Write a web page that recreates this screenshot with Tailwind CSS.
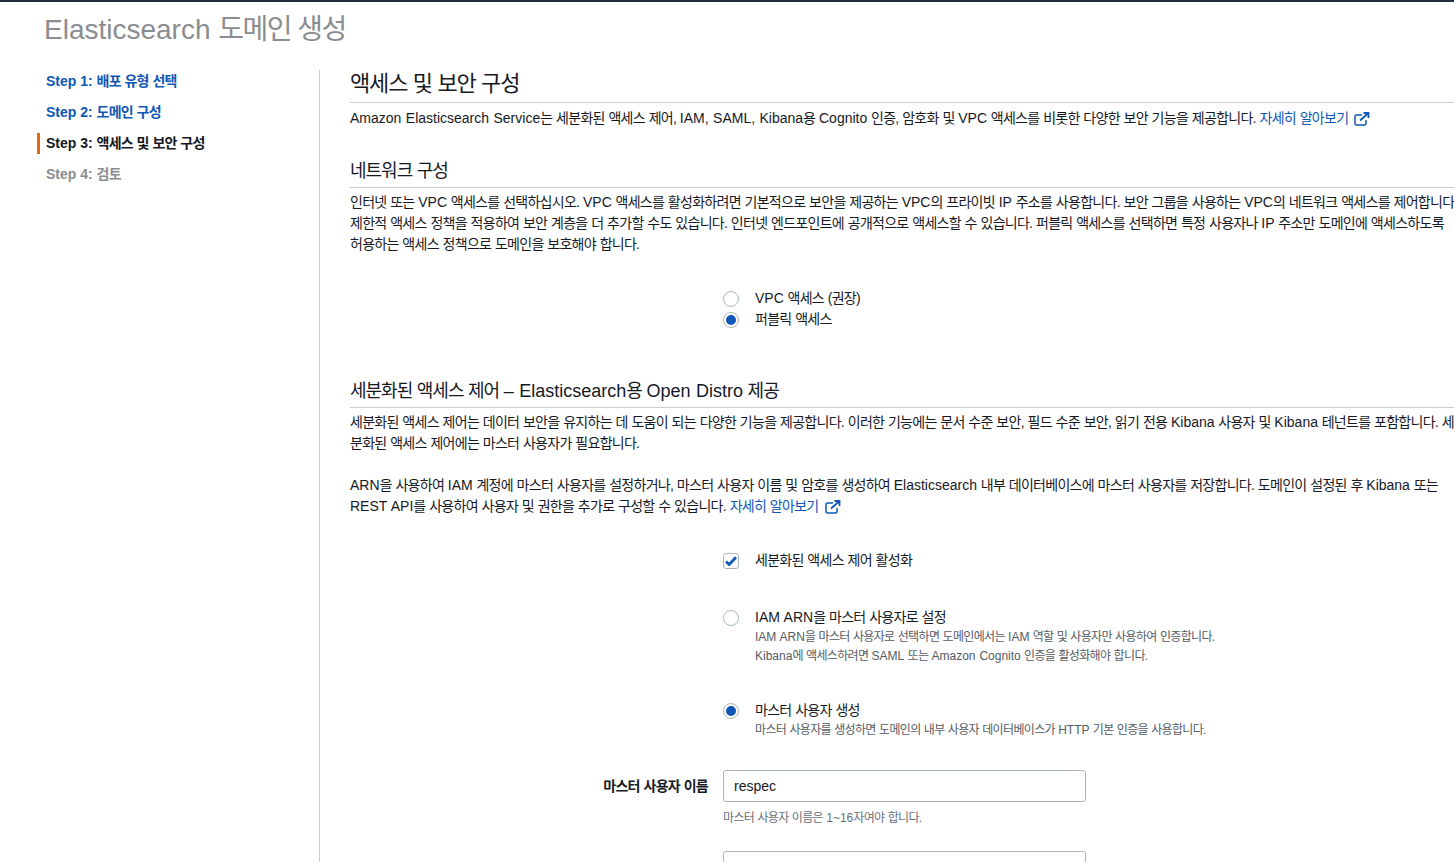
<!DOCTYPE html>
<html lang="ko">
<head>
<meta charset="utf-8">
<script src="https://cdn.jsdelivr.net/npm/@tailwindcss/browser@4"></script>
</head>
<body class="h-[862px] w-[1454px] overflow-hidden bg-white font-['Liberation_Sans','Noto_Sans_CJK_KR',sans-serif] text-[14px] leading-[21px] text-[#16191f]">
<div class="h-[2px] bg-[#232f3e]"></div>
<h1 class="h-[68px] pl-[44px] pt-[9px] text-[28px] leading-[38px] font-normal text-[#8a8d8f]">Elasticsearch <span class="tracking-[-1.5px]">도메인 생성</span></h1>
<div class="flex">
  <nav class="flex h-[800px] w-[320px] shrink-0 flex-col border-r border-[#cccccc] pt-px font-bold">
    <a class="h-[31px] pl-[46px] text-[#0f57b5]">Step 1: <span class="tracking-[-0.75px] [word-spacing:0.5px]">배포 유형 선택</span></a>
    <a class="h-[31px] pl-[46px] text-[#0f57b5]">Step 2: <span class="tracking-[-0.75px] [word-spacing:0.5px]">도메인 구성</span></a>
    <a class="mb-[10px] ml-[37px] h-[21px] border-l-[3px] border-[#dd6b10] pl-[6px] text-[#16191f]">Step 3: <span class="tracking-[-0.75px] [word-spacing:0.5px]">액세스 및 보안 구성</span></a>
    <a class="h-[21px] pl-[46px] text-[#8a8d8f]">Step 4: <span class="tracking-[-0.75px]">검토</span></a>
  </nav>
  <main class="min-w-0 flex-1 pl-[30px] tracking-[-0.72px] whitespace-nowrap [word-spacing:0.55px]">
    <h2 class="h-[33px] border-b border-[#cccccc] text-[22px] leading-[28px] font-normal tracking-[-1.15px]">액세스 및 보안 구성</h2>
    <p class="mt-[5px] flex items-center"><span><span class="tracking-normal">Amazon Elasticsearch Service</span>는 세분화된 액세스 제어, <span class="tracking-normal">IAM, SAML, Kibana</span>용 <span class="tracking-normal">Cognito</span> 인증, 암호화 및 <span class="tracking-normal">VPC</span> 액세스를 비롯한 다양한 보안 기능을 제공합니다.&nbsp;<a class="text-[#0f57b5]">자세히 알아보기</a></span>
      <svg class="ml-[6px]" width="16" height="14" viewBox="0 0 16 14" fill="none" stroke="#0f57b5" stroke-width="1.5"><path d="M8 3H2.5A1.5 1.5 0 0 0 1 4.5v7A1.5 1.5 0 0 0 2.5 13h8a1.5 1.5 0 0 0 1.5-1.5V8"/><path d="M6 8.5 14 1.5M9.5 1h5v5" stroke-width="1.8"/></svg>
    </p>
    <h3 class="mt-[28px] h-[31px] border-b border-[#cccccc] pt-[2px] text-[18px] leading-[24px] font-normal tracking-[-1px]">네트워크 구성</h3>
    <p class="mt-[4px]">인터넷 또는 <span class="tracking-normal">VPC</span> 액세스를 선택하십시오. <span class="tracking-normal">VPC</span> 액세스를 활성화하려면 기본적으로 보안을 제공하는 <span class="tracking-normal">VPC</span>의 프라이빗 <span class="tracking-normal">IP</span> 주소를 사용합니다. 보안 그룹을 사용하는 <span class="tracking-normal">VPC</span>의 네트워크 액세스를 제어합니다.<br>제한적 액세스 정책을 적용하여 보안 계층을 더 추가할 수도 있습니다. 인터넷 엔드포인트에 공개적으로 액세스할 수 있습니다. 퍼블릭 액세스를 선택하면 특정 사용자나 <span class="tracking-normal">IP</span> 주소만 도메인에 액세스하도록<br>허용하는 액세스 정책으로 도메인을 보호해야 합니다.</p>
    <div class="mt-[33px] ml-[373px] flex flex-col">
      <label class="flex h-[21px] items-center gap-[16px]"><span class="size-[16px] rounded-full border border-[#aab7b8] bg-white"></span><span><span class="tracking-normal">VPC</span> 액세스 (권장)</span></label>
      <label class="flex h-[21px] items-center gap-[16px]"><span class="flex size-[16px] items-center justify-center rounded-full border border-[#aab7b8] bg-white"><span class="size-[10px] rounded-full bg-[#0f57b5]"></span></span>퍼블릭 액세스</label>
    </div>
    <h3 class="mt-[48px] h-[30px] border-b border-[#cccccc] pt-px text-[18px] leading-[24px] font-normal tracking-[-1px]">세분화된 액세스 제어 <span class="tracking-normal">– Elasticsearch</span>용 <span class="tracking-normal">Open Distro</span> 제공</h3>
    <p class="mt-[4px]">세분화된 액세스 제어는 데이터 보안을 유지하는 데 도움이 되는 다양한 기능을 제공합니다. 이러한 기능에는 문서 수준 보안, 필드 수준 보안, 읽기 전용 <span class="tracking-normal">Kibana</span> 사용자 및 <span class="tracking-normal">Kibana</span> 테넌트를 포함합니다. 세<br>분화된 액세스 제어에는 마스터 사용자가 필요합니다.</p>
    <p class="mt-[21px] flex flex-col"><span><span class="tracking-normal">ARN</span>을 사용하여 <span class="tracking-normal">IAM</span> 계정에 마스터 사용자를 설정하거나, 마스터 사용자 이름 및 암호를 생성하여 <span class="tracking-normal">Elasticsearch</span> 내부 데이터베이스에 마스터 사용자를 저장합니다. 도메인이 설정된 후 <span class="tracking-normal">Kibana</span> 또는</span>
    <span class="flex items-center"><span><span class="tracking-normal">REST API</span>를 사용하여 사용자 및 권한을 추가로 구성할 수 있습니다.&nbsp;<a class="text-[#0f57b5]">자세히 알아보기</a></span>
      <svg class="ml-[6px]" width="16" height="14" viewBox="0 0 16 14" fill="none" stroke="#0f57b5" stroke-width="1.5"><path d="M8 3H2.5A1.5 1.5 0 0 0 1 4.5v7A1.5 1.5 0 0 0 2.5 13h8a1.5 1.5 0 0 0 1.5-1.5V8"/><path d="M6 8.5 14 1.5M9.5 1h5v5" stroke-width="1.8"/></svg></span></p>
    <div class="mt-[33px] ml-[373px]">
      <label class="flex h-[21px] items-center gap-[16px]"><span class="flex size-[16px] items-center justify-center rounded-[3px] border border-[#aab7b8] bg-white"><svg width="12" height="10" viewBox="0 0 12 10" fill="none" stroke="#0f57b5" stroke-width="2.8"><path d="M1 5.5 4.2 8.5 11 1.2"/></svg></span>세분화된 액세스 제어 활성화</label>
      <div class="mt-[36px] flex gap-[16px]"><span class="mt-[3px] size-[16px] shrink-0 rounded-full border border-[#aab7b8] bg-white"></span>
        <div><div><span class="tracking-normal">IAM ARN</span>을 마스터 사용자로 설정</div><div class="text-[12px] leading-[19px] tracking-[-0.65px] text-[#545b64]"><span class="tracking-normal">IAM ARN</span>을 마스터 사용자로 선택하면 도메인에서는 <span class="tracking-normal">IAM</span> 역할 및 사용자만 사용하여 인증합니다.<br><span class="tracking-normal">Kibana</span>에 액세스하려면 <span class="tracking-normal">SAML</span> 또는 <span class="tracking-normal">Amazon Cognito</span> 인증을 활성화해야 합니다.</div></div></div>
      <div class="mt-[34px] flex gap-[16px]"><span class="mt-[3px] flex size-[16px] shrink-0 items-center justify-center rounded-full border border-[#aab7b8] bg-white"><span class="size-[10px] rounded-full bg-[#0f57b5]"></span></span>
        <div><div>마스터 사용자 생성</div><div class="text-[12px] leading-[19px] tracking-[-0.65px] text-[#545b64]">마스터 사용자를 생성하면 도메인의 내부 사용자 데이터베이스가 <span class="tracking-normal">HTTP</span> 기본 인증을 사용합니다.</div></div></div>
    </div>
    <div class="mt-[30px] flex">
      <label class="w-[358px] pt-[6px] text-right font-bold">마스터 사용자 이름</label>
      <div class="ml-[15px] w-[363px]">
        <div class="flex h-[32px] items-center rounded-[3px] border border-[#aab7b8] bg-white px-[10px] tracking-normal">respec</div>
        <div class="mt-[7px] text-[12px] leading-[19px] tracking-[-0.65px] text-[#687078]">마스터 사용자 이름은 <span class="tracking-normal">1~16</span>자여야 합니다.</div>
      </div>
    </div>
    <div class="mt-[23px] ml-[373px] h-[32px] w-[363px] rounded-[3px] border border-[#aab7b8] bg-white"></div>
  </main>
</div>
</body>
</html>
